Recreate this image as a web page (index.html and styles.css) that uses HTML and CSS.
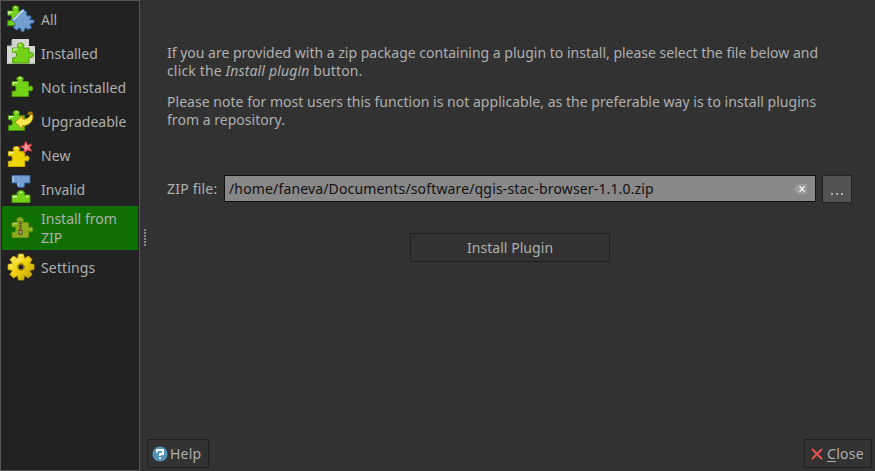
FILE: index.html
```html
<!DOCTYPE html>
<html lang="en">
<head>
<meta charset="utf-8">
<title>Plugins</title>
<link rel="stylesheet" href="styles.css">
</head>
<body>
<svg class="defs" width="0" height="0">
  <defs>
    <linearGradient id="gold" x1="0" y1="0" x2="1" y2="1"><stop offset="0" stop-color="#fff05a"/><stop offset=".5" stop-color="#f0d010"/><stop offset="1" stop-color="#b89a00"/></linearGradient>
    <path id="piece" d="M.6 5.600H5.800C6.500 4.600 5.300 4 5.300 2.800C5.300 1.200 6.800.5 8.600.5S11.800 1.300 11.800 2.900C11.800 4 10.800 4.600 11.300 5.600H17V10.500C18 11 18.300 9.800 19.500 9.900C20.800 10 21.200 11.300 21.200 12.500S20.600 15 19.400 15C18.300 15 18 14 17 14.500V20.500H.6V15.500C1.500 14.600 2 15.500 3 15.300C4.100 15 4.500 13.800 4.500 12.500S4 10 3 9.700C2 9.500 1.500 10.500.6 9.700Z"/>
  </defs>
</svg>
<div class="window">
  <nav class="sidebar">
    <div class="item">
      <svg class="icon" viewBox="0 0 28 28">
        <use href="#piece" transform="translate(0 .3)" fill="#73d216" stroke="#3c8404"/>
        <path d="M1.800 9.500V7.200H5.500M7.500 2.200H9.500" stroke="#d9f7b5" stroke-width="1.300" fill="none"/>
        <path d="M4.800 15L16 4L20 7.500C18.500 10 20 12 22.500 10.500L24.500 12.500L22.500 14C24 16 27.200 13.500 27.200 16.500C27.200 19 24 17.500 23 19L24.500 23L21 24.500L18.500 22.800C17 24 18.500 26.700 15.500 26.700C13 26.700 14.500 24 13 22.800L9.500 25L6.500 22.500L8.500 18.800Z" fill="#729fcf" stroke="#3465a4"/>
        <path d="M6 15L16.200 5" stroke="#d8e7f6" stroke-width="1.600"/>
      </svg>
      <span>All</span>
    </div>
    <div class="item">
      <svg class="icon" viewBox="0 0 28 28">
        <path d="M5 0H22V7H28V25H0V7H5Z" fill="#d3d7cf"/>
        <path d="M0 24.500H28M5 1V7H0" fill="none" stroke="#babdb6"/>
        <use href="#piece" transform="translate(5 3.500)" fill="#73d216" stroke="#4e9a06"/>
        <path d="M6.800 12.500V10.200H11M12 5.700H14" stroke="#e5fbc9" stroke-width="1.300" fill="none"/>
      </svg>
      <span>Installed</span>
    </div>
    <div class="item">
      <svg class="icon" viewBox="0 0 28 28">
        <use href="#piece" transform="translate(4.500 3)" fill="#73d216" stroke="#4e9a06"/>
        <path d="M6.300 12V9.700H10.500M12 5H14" stroke="#e5fbc9" stroke-width="1.300" fill="none"/>
      </svg>
      <span class="wide">Not installed</span>
    </div>
    <div class="item">
      <svg class="icon" viewBox="0 0 28 28">
        <use href="#piece" transform="translate(.8 3)" fill="#73d216" stroke="#3c8404"/>
        <path d="M2.500 12V9.700H6.500M8.500 5H10" stroke="#e5fbc9" stroke-width="1.300" fill="none"/>
        <path d="M20.500 8C20.500 5 22 4 24 4.500C26 5 26.500 7 26.300 10C25.500 8 24.500 7 23 7.500Z" fill="#a67a00"/>
        <path d="M8 15L15.500 8.500V12C19 12.500 22 11.500 23.500 7.500C25 7 26 8.500 26 10C25.500 15.500 20.500 19 15.500 18.500V22Z" fill="#fce94f" stroke="#a88a08"/>
      </svg>
      <span>Upgradeable</span>
    </div>
    <div class="item">
      <svg class="icon" viewBox="0 0 28 28">
        <use href="#piece" transform="translate(.8 5)" fill="#edd400" stroke="#d0aa00"/>
        <path d="M2.500 14V11.700H6.500M8.500 7H10" stroke="#fffbc0" stroke-width="1.300" fill="none"/>
        <path d="M18.500 0L20.800 3.900L25.200 3L22.500 6.600L25 10.300L20.600 9.200L17 12L17 7.500L13 5.600L17.300 4.300Z" fill="#f57980" stroke="#c82c35" stroke-width=".8"/>
        <path d="M18.500 3.500L19.500 5.500L18 8" stroke="#ffd5d6" fill="none"/>
      </svg>
      <span class="wide">New</span>
    </div>
    <div class="item">
      <svg class="icon" viewBox="0 0 28 28">
        <path d="M5 .3H23V8H17.500V9.500C18 12 16.500 12.600 14 12.600S10 12 10.300 9.500V8H5Z" fill="#729fcf" stroke="#3465a4" stroke-width=".9"/>
        <path d="M6 1V7M11 8V11" stroke="#c8dcf1"/>
        <path d="M5 27.500V20H10.500C9 17.500 11.500 15.500 14 15.500S18.500 17.500 17.500 20H23V27.500Z" fill="#73d216" stroke="#4e9a06"/>
        <path d="M6.500 23V21.500H10M13 17.300H15M19 21.500H21.500" stroke="#e5fbc9" stroke-width="1.300" fill="none"/>
      </svg>
      <span>Invalid</span>
    </div>
    <div class="item selected">
      <svg class="icon" viewBox="0 0 28 28">
        <use href="#piece" transform="translate(4.500 3)" fill="#8caf1c" stroke="#709314"/>
        <path d="M6.300 12V9.700H10" stroke="#bfd486" fill="none"/>
        <path d="M13.400 7V17" stroke="#665c29" stroke-width="3" stroke-dasharray="1 1"/>
        <path d="M13.400 7V16" stroke="#665c29"/>
        <rect x="11.700" y="16" width="3.600" height="4.500" rx="1.300" fill="#a4a45b" stroke="#665c29" stroke-width="1.300"/>
      </svg>
      <span>Install from ZIP</span>
    </div>
    <div class="item">
      <svg class="icon" viewBox="0 0 28 28">
        <path fill="url(#gold)" stroke="#d2ae00" stroke-width=".7" fill-rule="evenodd" d="M11.500 1H16.500L17.500 5.500L21.500 3L25 6.500L22.500 10.500L27 11.500V16.500L22.500 17.500L25 21.500L21.500 25L17.500 22.500L16.500 27H11.500L10.500 22.500L6.500 25L3 21.500L5.500 17.500L1 16.500V11.500L5.500 10.500L3 6.500L6.500 3L10.500 5.500ZM14 11A3 3 0 1 0 14 17A3 3 0 1 0 14 11Z"/>
        <path d="M12.500 2.500H15.500M5 6.500L7 5M2.500 13H5M7.500 9.500C9.500 7 12 6.500 15 6.800" stroke="#fff9ac" fill="none"/>
        <circle cx="14" cy="14" r="3.500" stroke="#a68900" fill="none"/>
      </svg>
      <span class="wide">Settings</span>
    </div>
  </nav>
  <div class="splitter"><i></i></div>
  <main class="content">
    <section class="page">
      <p>If you are provided with a zip package containing a plugin to install, please select the file below and<br><span class="wide">click the <em>Install plugin</em> button.</span></p>
      <p class="note">Please note for most users this function is not applicable, as the preferable way is to install plugins<br>from a repository.</p>
      <div class="file-row">
        <label>ZIP file:</label>
        <div class="field">
          <span>/home/faneva/Documents/software/qgis-stac-browser-1.1.0.zip</span>
          <svg width="14" height="10" viewBox="0 0 14 10"><path d="M0 5L4 0H13V10H4Z" fill="#9b9b9b"/><path d="M5.500 2.300L10.500 7.700M10.500 2.300L5.500 7.700" stroke="#f2f2f2" stroke-width="1.300"/></svg>
        </div>
        <button class="browse"><i></i><i></i><i></i></button>
      </div>
      <button class="install">Install Plugin</button>
    </section>
    <footer class="actions">
      <button class="help">
        <svg width="16" height="16" viewBox="0 0 16 16"><circle cx="8" cy="8" r="7.600" fill="#5294b8"/><path d="M5 6.500V4H11V8H8V10M8 11.200V13" stroke="#fff" stroke-width="2" fill="none"/></svg>
        <span>Help</span>
      </button>
      <button class="close">
        <svg width="12" height="12" viewBox="0 0 12 12"><path d="M1 1L11 11M11 1L1 11" stroke="#ed5353" stroke-width="1.800"/></svg>
        <span><u>C</u>lose</span>
      </button>
    </footer>
  </main>
</div>
</body>
</html>
```
FILE: styles.css
```css
* { box-sizing: border-box; }
body {
  margin: 0;
  background: #323232;
  color: #afafaf;
  font: 14px/18px "Noto Sans", sans-serif;
}
.defs { display: block; }
.window { display: flex; width: 875px; height: 471px; overflow: hidden; }
.sidebar {
  width: 140px;
  padding: 1px;
  background: #222;
  border: 1px solid #555;
}
.item { display: flex; align-items: center; height: 34px; padding-left: 5px; gap: 6px; line-height: 19px; }
.item span { width: 96px; }
.wide { letter-spacing: .15px; }
.note { letter-spacing: .03px; }
.selected { height: 44px; background: #0f6f00; }
.icon { width: 28px; height: 28px; flex: none; }
.splitter { width: 7px; display: flex; justify-content: center; padding: 229px 0 0 3px; }
.splitter i { width: 2px; height: 17px; background: repeating-linear-gradient(#858585 0 2px, transparent 2px 3px); }
.content { flex: 1; display: flex; flex-direction: column; justify-content: space-between; }
.page { padding: 44px 23px 0 20px; display: flex; flex-direction: column; }
p { margin: 0 0 13px; white-space: nowrap; }
button { font: inherit; color: inherit; padding: 0; background: #323232; border: 1px solid #1f1f1f; }
.file-row { display: flex; align-items: flex-start; margin-top: 33px; height: 28px; }
label { width: 57px; line-height: 28px; letter-spacing: .2px; }
.field {
  display: flex; align-items: center; justify-content: space-between;
  width: 592px; height: 27px; padding: 0 7px 0 4px;
  color: #111; background: #888; border: 1px solid #111;
  letter-spacing: .15px;
}
.browse { display: flex; align-items: flex-start; justify-content: center; gap: 3px; width: 30px; height: 28px; margin-left: 6px; padding-top: 17px; background: #525252; border-color: #222; }
.browse i { width: 2px; height: 2px; background: #afafaf; }
.install { width: 200px; height: 29px; margin: 30px 0 0 243px; letter-spacing: .05px; }
.actions { display: flex; justify-content: space-between; padding: 0 3px 3px 0; }
.actions button { display: flex; align-items: center; height: 29px; }
.help { width: 62px; padding-left: 4px; gap: 2px; letter-spacing: .2px; }
.close { width: 68px; padding-left: 6px; gap: 4px; letter-spacing: .3px; }
u { text-underline-offset: 2px; text-decoration-thickness: 1px; }
```
